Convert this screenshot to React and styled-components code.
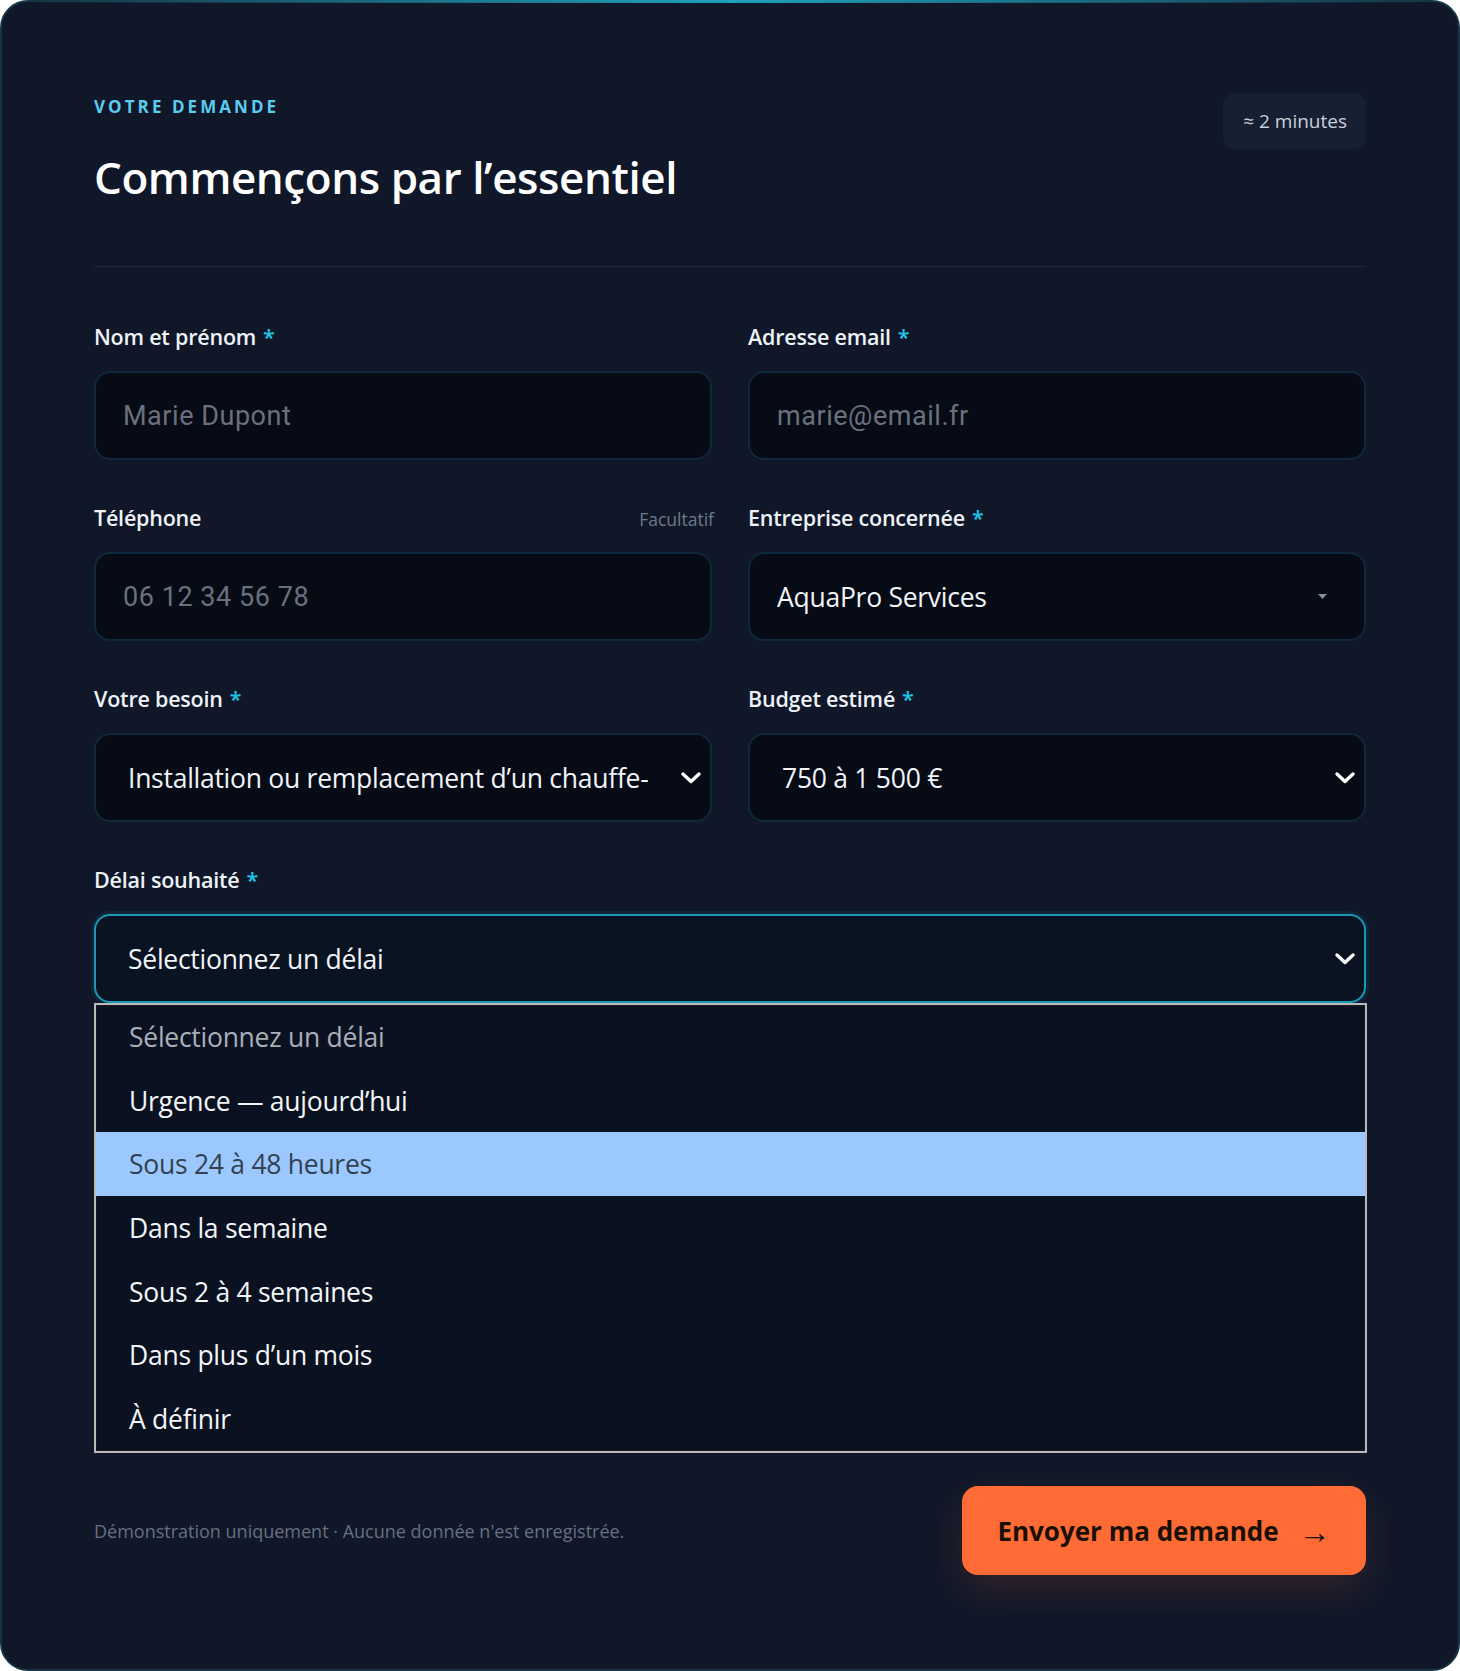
import React from "react";
import styled, { createGlobalStyle, css } from "styled-components";

const GlobalStyle = createGlobalStyle`
  * {
    box-sizing: border-box;
  }
  body {
    margin: 0;
    background: #ffffff;
    font-family: "Open Sans", "Noto Sans", sans-serif;
  }
`;

const Card = styled.section`
  position: relative;
  min-height: 100vh;
  padding: 90px 92px 94px;
  background: #0f1729;
  border: 2px solid #163645;
  border-radius: 28px;
  color: #f1f5f9;

  &::before {
    content: "";
    position: absolute;
    top: -2px;
    left: 30px;
    right: 30px;
    height: 3px;
    background: linear-gradient(
      90deg,
      rgba(34, 211, 238, 0) 0%,
      rgba(34, 190, 220, 0.8) 50%,
      rgba(34, 211, 238, 0) 100%
    );
  }
`;

const Header = styled.header`
  display: flex;
  justify-content: space-between;
  align-items: flex-start;
  padding-bottom: 60px;
  border-bottom: 1px solid #1f2a3b;
`;

const Eyebrow = styled.p`
  margin: 5px 0 0;
  font-size: 17px;
  line-height: 20px;
  font-weight: 700;
  letter-spacing: 0.18em;
  text-transform: uppercase;
  color: #5ccbf0;
`;

const Title = styled.h1`
  margin: 31px 0 0;
  font-size: 44px;
  line-height: 58px;
  font-weight: 600;
  letter-spacing: -0.01em;
  color: #ffffff;
`;

const Badge = styled.span`
  display: inline-flex;
  align-items: center;
  height: 56px;
  padding: 0 19px 0 20px;
  margin-top: 1px;
  border-radius: 12px;
  background: #172033;
  font-size: 19px;
  color: #c9d1dc;
`;

const FormGrid = styled.div`
  display: grid;
  grid-template-columns: minmax(0, 1fr) minmax(0, 1fr);
  column-gap: 36px;
  row-gap: 44px;
  margin-top: 56px;
`;

const Field = styled.div`
  position: relative;
  min-width: 0;
  display: flex;
  flex-direction: column;
  gap: 20px;
  ${(p) => p.$wide && "grid-column: 1 / -1;"}
`;

const LabelRow = styled.div`
  display: flex;
  justify-content: space-between;
  align-items: baseline;
  height: 28px;
`;

const Label = styled.label`
  font-size: 21.5px;
  line-height: 28px;
  font-weight: 600;
  letter-spacing: -0.01em;
  color: #eef2f7;
`;

const Required = styled.span`
  margin-left: 7px;
  color: #22c5e8;
`;

const Hint = styled.span`
  font-size: 17.5px;
  color: #717a88;
  margin-right: -2px;
`;

const controlBase = css`
  width: 100%;
  height: 89px;
  border-radius: 16px;
  border: 2px solid #10293a;
  background: #060b16;
  color: #f1f5f9;
`;

const TextInput = styled.input`
  ${controlBase};
  padding: 0 27px;
  font-family: Roboto, "Open Sans", sans-serif;
  font-size: 27px;
  letter-spacing: 0.02em;
  outline: none;

  &::placeholder {
    color: #6a717c;
  }
`;

const SelectBox = styled.div`
  ${controlBase};
  display: flex;
  align-items: center;
  gap: 32px;
  padding: ${(p) => (p.$native ? "0 37px 0 27px" : "0 8px 0 32px")};
  font-size: 26.5px;
  letter-spacing: -0.01em;

  ${(p) =>
    p.$focused &&
    css`
      border-color: #1c98b6;
      background: #0a1322;
      box-shadow: 0 0 0 3px rgba(34, 211, 238, 0.07);
    `}
`;

const SelectValue = styled.span`
  flex: 1;
  min-width: 0;
  overflow: hidden;
  white-space: nowrap;
`;

const Listbox = styled.ul`
  position: absolute;
  z-index: 5;
  top: 100%;
  left: 0;
  right: -1px;
  margin: 0;
  padding: 0;
  list-style: none;
  background: #0a1221;
  border: 2px solid #b9b9b9;
  box-shadow: inset 0 0 0 1px #1a1a1a;
`;

const Option = styled.li`
  display: flex;
  align-items: center;
  height: 63.7px;
  padding-left: 33px;
  font-size: 26.5px;
  letter-spacing: -0.01em;
  color: ${(p) => (p.$muted ? "#a9afb8" : "#f4f6f9")};

  ${(p) =>
    p.$active &&
    css`
      background: #9bc9ff;
      color: #33404f;
    `}
`;

const Footer = styled.footer`
  display: flex;
  justify-content: space-between;
  align-items: center;
  margin-top: 483px;
`;

const Note = styled.p`
  margin: 0;
  font-size: 18px;
  color: #677081;
`;

const SubmitButton = styled.button`
  display: inline-flex;
  align-items: center;
  justify-content: center;
  gap: 20px;
  width: 404px;
  height: 89px;
  border: none;
  border-radius: 16px;
  background: #ff6b35;
  color: #1b1008;
  font-family: "Open Sans", sans-serif;
  font-size: 26px;
  font-weight: 700;
  box-shadow: 0 14px 44px rgba(255, 107, 53, 0.16);
  cursor: pointer;
`;

const Arrow = styled.span`
  font-size: 32px;
  font-weight: 400;
  line-height: 1;
`;

const Chevron = () => (
  <svg width="22" height="13" viewBox="0 0 22 13" fill="none">
    <path
      d="M3 3l8 7.5L19 3"
      stroke="#ffffff"
      strokeWidth="3.4"
      strokeLinecap="round"
      strokeLinejoin="round"
    />
  </svg>
);

const NativeArrow = () => (
  <svg width="9" height="5" viewBox="0 0 9 5">
    <path d="M0 0h9L4.5 5z" fill="#8a919b" />
  </svg>
);

const delais = [
  "Sélectionnez un délai",
  "Urgence — aujourd’hui",
  "Sous 24 à 48 heures",
  "Dans la semaine",
  "Sous 2 à 4 semaines",
  "Dans plus d’un mois",
  "À définir",
];

const FieldLabel = ({ children, required, hint }) => (
  <LabelRow>
    <Label>
      {children}
      {required && <Required>*</Required>}
    </Label>
    {hint && <Hint>{hint}</Hint>}
  </LabelRow>
);

export default function App() {
  return (
    <>
      <GlobalStyle />
      <Card>
        <Header>
          <div>
            <Eyebrow>Votre demande</Eyebrow>
            <Title>Commençons par l’essentiel</Title>
          </div>
          <Badge>≈ 2 minutes</Badge>
        </Header>

        <FormGrid>
          <Field>
            <FieldLabel required>Nom et prénom</FieldLabel>
            <TextInput placeholder="Marie Dupont" />
          </Field>
          <Field>
            <FieldLabel required>Adresse email</FieldLabel>
            <TextInput placeholder="marie@email.fr" />
          </Field>

          <Field>
            <FieldLabel hint="Facultatif">Téléphone</FieldLabel>
            <TextInput placeholder="06 12 34 56 78" />
          </Field>
          <Field>
            <FieldLabel required>Entreprise concernée</FieldLabel>
            <SelectBox $native>
              <SelectValue>AquaPro Services</SelectValue>
              <NativeArrow />
            </SelectBox>
          </Field>

          <Field>
            <FieldLabel required>Votre besoin</FieldLabel>
            <SelectBox>
              <SelectValue>Installation ou remplacement d’un chauffe-eau</SelectValue>
              <Chevron />
            </SelectBox>
          </Field>
          <Field>
            <FieldLabel required>Budget estimé</FieldLabel>
            <SelectBox>
              <SelectValue>750 à 1 500 €</SelectValue>
              <Chevron />
            </SelectBox>
          </Field>

          <Field $wide>
            <FieldLabel required>Délai souhaité</FieldLabel>
            <div style={{ position: "relative" }}>
              <SelectBox $focused>
                <SelectValue>Sélectionnez un délai</SelectValue>
                <Chevron />
              </SelectBox>
              <Listbox role="listbox">
                {delais.map((d, i) => (
                  <Option key={d} $muted={i === 0} $active={i === 2}>
                    {d}
                  </Option>
                ))}
              </Listbox>
            </div>
          </Field>
        </FormGrid>

        <Footer>
          <Note>Démonstration uniquement · Aucune donnée n'est enregistrée.</Note>
          <SubmitButton type="button">
            Envoyer ma demande <Arrow>→</Arrow>
          </SubmitButton>
        </Footer>
      </Card>
    </>
  );
}
